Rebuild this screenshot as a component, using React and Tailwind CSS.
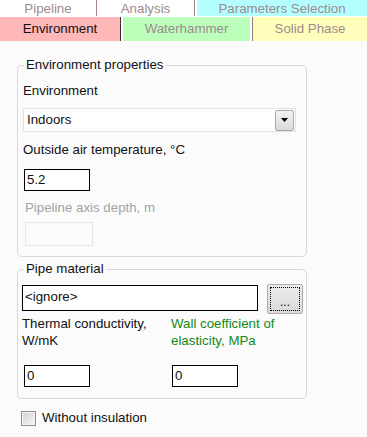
import React from "react";

const font = { fontFamily: '"Liberation Sans", Arial, sans-serif' };

function TextBox({ value, className = "" }) {
  return (
    <div className={`h-[22px] w-[66px] border border-black bg-white pl-[2px] text-[13.3px] leading-[20px] text-[#111] ${className}`}>
      {value}
    </div>
  );
}

export default function App() {
  return (
    <div className="h-[437px] w-[367px] overflow-hidden bg-[#fbfbfb] text-[13.3px] text-[#111]" style={font}>
      {/* tabs */}
      <div className="bg-white">
        <div className="flex h-[16px] text-[13.3px] leading-[17px] text-[#9d8b91]">
          <div className="w-[97px] border-r border-[#a08a8e] text-center">Pipeline</div>
          <div className="w-[98px] border-r border-[#a08a8e] text-center">Analysis</div>
          <div className="ml-[2px] flex-1 bg-[#b3ffff] text-center">Parameters Selection</div>
        </div>
        <div className="mt-[1px] flex h-[24px] text-[13.3px] leading-[24px]">
          <div className="w-[121px] border-r border-[#333] bg-[#ffb7b7] text-center text-[#111]">Environment</div>
          <div className="ml-[2px] w-[127px] bg-[#bbffbb] text-center text-[#9d8b91]">Waterhammer</div>
          <div className="ml-[1px] w-[2px] border-r border-[#8b7b7f] bg-white" />
          <div className="flex-1 bg-[#ffffbb] text-center text-[#9d8b91]">Solid Phase</div>
        </div>
      </div>

      {/* fieldset 1 */}
      <fieldset className="ml-[17px] mt-[17px] w-[290px] rounded-[5px] border border-[#d9d9d9] pb-[10px]">
        <legend className="ml-[6px] px-[2px] text-[13.3px] leading-[14px]">Environment properties</legend>
        <div className="pl-[5px]">
          <div className="mt-[11px] leading-[16px]">Environment</div>
          <div className="mt-[9px] flex h-[24px] w-[273px] items-center justify-between border border-[#e0e1e6] bg-white pl-[3px] pr-[1px]">
            <span className="leading-[16px]">Indoors</span>
            <div className="flex h-[21px] w-[19px] items-center justify-center rounded-[2px] border border-[#a8a8a8] bg-gradient-to-b from-[#f4f4f4] to-[#d9d9d9]">
              <svg width="7" height="4" viewBox="0 0 7 4"><path d="M0 0h7L3.5 4z" fill="#000" /></svg>
            </div>
          </div>
          <div className="mt-[10px] leading-[16px]">Outside air temperature, °C</div>
          <TextBox value="5.2" className="ml-[1px] mt-[11px]" />
          <div className="mt-[9px] pl-[2px] leading-[16px] text-[#a3a3a3]">Pipeline axis depth, m</div>
          <div className="ml-[2px] mt-[6px] h-[24px] w-[68px] border border-[#e6e6e6] bg-[#fbfbfb]" />
        </div>
      </fieldset>

      {/* fieldset 2 */}
      <fieldset className="ml-[17px] mt-[5px] w-[290px] rounded-[5px] border border-[#d9d9d9] pb-[11px]">
        <legend className="ml-[6px] px-[2px] text-[13.3px] leading-[14px]">Pipe material</legend>
        <div className="pl-[4px]">
          <div className="mt-[8px] flex items-start">
            <div className="mt-[1px] h-[26px] w-[236px] border border-black bg-white pl-[2px] text-[13.3px] leading-[22px]">&lt;ignore&gt;</div>
            <div className="ml-[9px] flex h-[30px] w-[36px] items-center justify-center rounded-[2px] border border-[#adadad] bg-gradient-to-b from-[#ececec] to-[#dadada] p-[2px]">
              <div className="flex h-full w-full items-end justify-center border border-dotted border-black pb-[1px] text-[12px] leading-[14px]">...</div>
            </div>
          </div>
          <div className="mt-[1px] flex">
            <div className="w-[149px]">
              <div className="w-[145px] leading-[17px]">Thermal conductivity, W/mK</div>
              <TextBox value="0" className="ml-[2px] mt-[16px]" />
            </div>
            <div className="w-[134px]">
              <div className="w-[130px] leading-[17px] text-[#138a13]">Wall coefficient of elasticity, MPa</div>
              <TextBox value="0" className="ml-[1px] mt-[16px]" />
            </div>
          </div>
        </div>
      </fieldset>

      {/* checkbox */}
      <div className="ml-[21px] mt-[11px] flex items-center">
        <div className="flex h-[15px] w-[15px] items-center justify-center border border-[#8e8e8e] bg-[#f3f3f3]">
          <div className="h-[11px] w-[11px] bg-gradient-to-br from-[#d6d6d6] to-[#f2f2f2]" />
        </div>
        <span className="ml-[6px] leading-[16px]">Without insulation</span>
      </div>
    </div>
  );
}
